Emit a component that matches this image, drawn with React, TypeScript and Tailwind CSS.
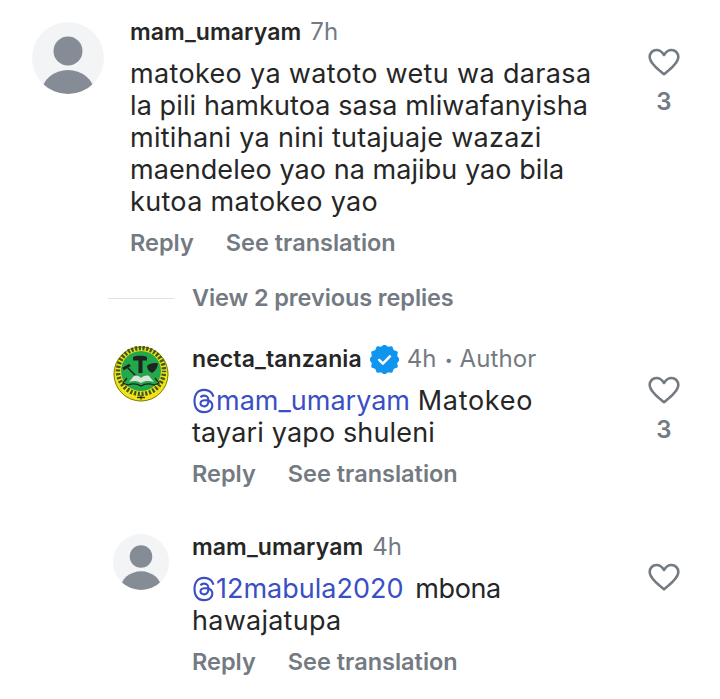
import { FaThreads } from "react-icons/fa6";

const font = { fontFamily: "Inter, 'Noto Sans', sans-serif" };

function Heart() {
  return (
    <svg width="32" height="28" viewBox="0 0 32 28" fill="none" stroke="#737a82" strokeWidth="2.6" strokeLinejoin="round">
      <path d="M16 26.2C13.4 24 9.6 21 6.6 17.8 3.6 14.6 1.7 12.2 1.7 8.9 1.7 5 4.7 2 8.5 2c3 0 5.600 1.700 7.500 5 1.900-3.300 4.500-5 7.500-5 3.800 0 6.800 3 6.800 6.900 0 3.300-1.900 5.700-4.900 8.900-3 3.200-6.800 6.200-9.400 8.400Z" />
    </svg>
  );
}

function Avatar({ size }: { size: "lg" | "md" }) {
  const cls = size === "lg" ? "w-[72px] h-[72px]" : "w-[56px] h-[56px]";
  return (
    <div className={`${cls} shrink-0 rounded-full bg-[#f3f4f6] overflow-hidden`}>
      <svg viewBox="0 0 72 72" className="w-full h-full">
        <circle cx="36" cy="29" r="14.500" fill="#868c96" />
        <ellipse cx="36" cy="70" rx="26" ry="22" fill="#868c96" />
      </svg>
    </div>
  );
}

function Logo() {
  return (
    <svg viewBox="0 0 56 56" className="w-[56px] h-[56px] shrink-0">
      <circle cx="28" cy="28" r="27.500" fill="#f2e21a" />
      <circle cx="28" cy="28" r="27" fill="none" stroke="#5a6418" strokeWidth="0.800" />
      <circle cx="28" cy="25" r="23" fill="none" stroke="#3f5a1c" strokeWidth="4.500" strokeDasharray="2.200 1.600" strokeDashoffset="1" />
      <circle cx="28" cy="25" r="20" fill="#22a94b" />
      <path d="M20 11c2.500-1.800 11-1.800 14 0v3.500h-4.500V27h-4V14.500H20Z" fill="#20231f" />
      <path d="M34 20c3-3 8-3.500 11-2.500-.5 4-2.500 7.500-6 9.500-3-1.500-5-3.500-5-7Z" fill="#20231f" />
      <path d="M10 23l7-4" stroke="#20231f" strokeWidth="3" />
      <path d="M14 21l11 11" stroke="#20231f" strokeWidth="1.500" />
      <path d="M16 36l5-6c3-1 5 0 7 2 2-2 5-3 8-2l5 6c-4-1.500-9-1.500-13 1-4-2.500-8-2.500-12-1Z" fill="#dfe2dc" />
      <path d="M14 32l-4 5 5 2c4-1.500 9-1.500 13 1 4-2.500 9-2.500 13-1l5-2-4-5" fill="none" stroke="#20231f" strokeWidth="1.300" />
      <path d="M24 51.500h8" stroke="#26301a" strokeWidth="1.300" />
      <path d="M28 49.500v4" stroke="#26301a" strokeWidth="1.300" />
    </svg>
  );
}

function Verified() {
  const pts: string[] = [];
  for (let i = 0; i < 24; i++) {
    const r = i % 2 === 0 ? 15 : 12.8;
    const a = (i * Math.PI) / 12;
    pts.push(`${15 + r * Math.sin(a)},${15 - r * Math.cos(a)}`);
  }
  return (
    <svg viewBox="0 0 30 30" className="w-[29px] h-[29px] shrink-0">
      <polygon points={pts.join(" ")} fill="#0f95f0" stroke="#0f95f0" strokeWidth="1.500" strokeLinejoin="round" />
      <path d="M9.500 15.500l3.800 3.800 7.300-7.600" fill="none" stroke="#fff" strokeWidth="2.600" strokeLinecap="round" strokeLinejoin="round" />
    </svg>
  );
}

function Mention({ name }: { name: string }) {
  return (
    <span className="text-[#3a4fc4] tracking-[0px]">
      <FaThreads className="inline-block w-[24px] h-[26px] align-[-4px]" />
      {name}
    </span>
  );
}

function Actions() {
  return (
    <div className="flex gap-8 h-[32px] items-center text-[23.500px] font-semibold text-[#737a82]">
      <span>Reply</span>
      <span>See translation</span>
    </div>
  );
}

function Name({ children }: { children: React.ReactNode }) {
  return <span className="text-[23px] font-semibold text-[#262626] tracking-[0.1px]">{children}</span>;
}

function Time({ children }: { children: React.ReactNode }) {
  return <span className="text-[24px] text-[#737a82] tracking-[0.1px]">{children}</span>;
}

function Like({ count }: { count?: string }) {
  return (
    <div className="w-[32px] shrink-0 flex flex-col items-center">
      <Heart />
      {count && <span className="mt-[12px] text-[24px] leading-[28px] font-semibold text-[#737a82]">{count}</span>}
    </div>
  );
}

export default function App() {
  return (
    <div style={font} className="w-[720px] h-[699px] bg-white overflow-hidden flex flex-col pt-[16px] text-[#262626]">
      <div className="flex pl-[32px] pr-[40px] h-[244px]">
        <div className="pt-[6px] mr-[26px]"><Avatar size="lg" /></div>
        <div className="flex-1">
          <div className="flex items-center gap-[9px] h-[32px]">
            <Name>mam_umaryam</Name>
            <Time>7h</Time>
          </div>
          <div className="mt-[10px] text-[27px] tracking-[0.34px] leading-[32px]">
            <div>matokeo ya watoto wetu wa darasa</div>
            <div className="tracking-[0.11px]">la pili hamkutoa sasa mliwafanyisha</div>
            <div className="tracking-[0.28px]">mitihani ya nini tutajuaje wazazi</div>
            <div className="tracking-[0.06px]">maendeleo yao na majibu yao bila</div>
            <div>kutoa matokeo yao</div>
          </div>
          <div className="mt-[9px]"><Actions /></div>
        </div>
        <div className="pt-[32px]"><Like count="3" /></div>
      </div>

      <div className="flex items-center h-[32px] mt-[22px] pl-[108px]">
        <div className="w-[66px] h-px bg-[#dfe1e4] mr-[18px]" />
        <span className="text-[23.500px] font-semibold text-[#737a82] tracking-[-0.1px]">View 2 previous replies</span>
      </div>

      <div className="flex pl-[113px] pr-[40px] mt-[29px] h-[148px]">
        <div className="mr-[23px] pt-[3px]"><Logo /></div>
        <div className="flex-1">
          <div className="flex items-center h-[32px]">
            <Name>necta_tanzania</Name>
            <span className="ml-[8px]"><Verified /></span>
            <span className="ml-[8px]"><Time>4h</Time></span>
            <span className="ml-[8px] mr-[7px] text-[#737a82] text-[14px]">•</span>
            <Time>Author</Time>
          </div>
          <div className="mt-[10px] text-[27px] tracking-[0.15px] leading-[32px] w-[400px]">
            <Mention name="mam_umaryam" /> <span className="tracking-[0.7px]">Matokeo</span><br />tayari yapo shuleni
          </div>
          <div className="mt-[9px]"><Actions /></div>
        </div>
        <div className="pt-[33px]"><Like count="3" /></div>
      </div>

      <div className="flex pl-[113px] pr-[40px] mt-[40px]">
        <div className="mr-[23px] pt-[3px]"><Avatar size="md" /></div>
        <div className="flex-1">
          <div className="flex items-center gap-[9px] h-[32px]">
            <Name>mam_umaryam</Name>
            <Time>4h</Time>
          </div>
          <div className="mt-[10px] text-[27px] tracking-[0.25px] leading-[32px]">
            <Mention name="12mabula2020" /> <span className="ml-[4px] tracking-[-0.4px]">mbona</span><br />hawajatupa
          </div>
          <div className="mt-[9px]"><Actions /></div>
        </div>
        <div className="pt-[32px]"><Like /></div>
      </div>
    </div>
  );
}
